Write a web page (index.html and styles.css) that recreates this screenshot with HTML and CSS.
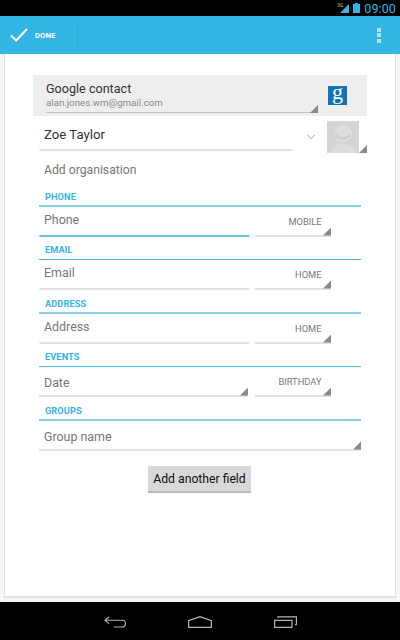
FILE: index.html
```
<!DOCTYPE html>
<html lang="en">
<head>
<meta charset="utf-8">
<title>Edit contact</title>
<link rel="stylesheet" href="styles.css">
</head>
<body>
<div class="screen">
  <header class="status">
    <span class="net">3G</span>
    <svg class="signal" width="9" height="9" viewBox="0 0 9 9"><path d="M9 0V9H0Z" fill="#33b5e5"/></svg>
    <svg class="battery" width="7" height="10" viewBox="0 0 7 10"><path d="M2 0H5V1H7V10H0V1H2Z" fill="#33b5e5"/></svg>
    <span class="clock">09:00</span>
  </header>
  <div class="actionbar">
    <div class="done">
      <svg width="18" height="14" viewBox="0 0 18 14"><path d="M1 7.5L6.2 12.5L17 1" fill="none" stroke="#fff" stroke-width="2"/></svg>
      <span>DONE</span>
    </div>
    <div class="more"><i></i><i></i><i></i></div>
  </div>
  <main class="sheet">
    <div class="account">
      <div class="account-text spin">
        <div class="account-name">Google contact</div>
        <div class="account-mail">alan.jones.wm@gmail.com</div>
      </div>
      <div class="glogo">g</div>
    </div>
    <div class="name-row">
      <div class="name-field">Zoe Taylor</div>
      <svg class="chev" width="10" height="6" viewBox="0 0 10 6"><path d="M1 1L5 4.5L9 1" fill="none" stroke="#a8a8a8" stroke-width="1"/></svg>
      <div class="photo spin">
        <svg width="32" height="32" viewBox="0 0 32 32"><rect width="32" height="32" fill="#d4d4d4"/><circle cx="16" cy="13" r="9" fill="#dcdcdc"/><path d="M9 14Q16 21 23 14" fill="none" stroke="#c8c8c8" stroke-width="1.5"/><path d="M4 32Q5 23 16 23Q27 23 28 32Z" fill="#dcdcdc"/></svg>
      </div>
    </div>
    <div class="org">Add organisation</div>
    <section class="group">
      <h2 class="thick">PHONE</h2>
      <div class="row">
        <div class="field focus">Phone</div>
        <div class="type spin">MOBILE</div>
      </div>
    </section>
    <section class="group">
      <h2>EMAIL</h2>
      <div class="row">
        <div class="field">Email</div>
        <div class="type spin">HOME</div>
      </div>
    </section>
    <section class="group">
      <h2 class="thick">ADDRESS</h2>
      <div class="row">
        <div class="field">Address</div>
        <div class="type spin">HOME</div>
      </div>
    </section>
    <section class="group">
      <h2>EVENTS</h2>
      <div class="row">
        <div class="field spin plain">Date</div>
        <div class="type spin">BIRTHDAY</div>
      </div>
    </section>
    <section class="group">
      <h2 class="thick">GROUPS</h2>
      <div class="row">
        <div class="field spin plain wide">Group name</div>
      </div>
    </section>
    <div class="actions"><button class="add" type="button">Add another field</button></div>
  </main>
  <nav class="navbar">
    <svg width="22" height="12" viewBox="0 0 22 12"><path d="M5 1L1 4.3L5 7.6M1 4.3H18Q21.5 4.3 21.5 7.6Q21.5 11 18 11H10" fill="none" stroke="#b4b4b4" stroke-width="1.1"/></svg>
    <svg width="24" height="12" viewBox="0 0 24 12"><path d="M.6 4.6L12 .6L23.4 4.6V11.4H.6Z" fill="none" stroke="#b4b4b4" stroke-width="1.2"/></svg>
    <svg width="23" height="12" viewBox="0 0 23 12"><path d="M.6 4.4H18V11.4H.6Z" fill="none" stroke="#b4b4b4" stroke-width="1.2"/><path d="M4 2V.8H22.4V8.6H21" fill="none" stroke="#b4b4b4" stroke-width="1.2"/></svg>
  </nav>
</div>
</body>
</html>
```
FILE: styles.css
```
* { box-sizing: border-box; }
html, body { margin: 0; padding: 0; }
body { background: #000; font-family: Roboto, "Liberation Sans", sans-serif; }
.screen { width: 400px; height: 640px; display: flex; flex-direction: column; background: #f6f6f6; overflow: hidden; }

.status { height: 16px; background: #000; display: flex; align-items: flex-start; justify-content: flex-end; padding-right: 4px; flex: none; }
.net { font-size: 5px; color: #bbb; margin-top: 2px; line-height: 6px; margin-right: -3px; }
.signal { margin-right: 4px; margin-top: 4px; }
.battery { margin-right: 4px; margin-top: 3px; }
.clock { font-size: 12.5px; color: #33b5e5; line-height: 16px; letter-spacing: .1px; margin-top: 1px; }

.actionbar { height: 38px; flex: none; background: #33b5e5; display: flex; align-items: center; justify-content: space-between; }
.done { width: 78px; height: 24px; display: flex; align-items: center; padding-left: 10px; gap: 7px; border-right: 1px solid #2fabd9; color: #fff; font-size: 7.8px; font-weight: 700; }
.more { width: 4px; margin-right: 19px; display: flex; flex-direction: column; gap: 1.5px; }
.more i { display: block; height: 4px; background: #b5e3f5; }

.sheet { width: 392px; height: 544px; margin: 0 4px; flex: none; background: #fff; border: solid #e2e2e2; border-width: 0 1px 2px; padding: 21px 28px 0; }

.spin { position: relative; }
.spin::after { content: ""; position: absolute; right: 0; bottom: -1px; width: 8px; height: 8px; background: #8a8a8a; clip-path: polygon(100% 0, 100% 100%, 0 100%); }
.photo.spin::after { bottom: 0; }

.account { height: 41px; background: #eeeeee; display: flex; align-items: flex-start; padding: 5px 20px 0 13px; }
.account-text { width: 272px; height: 33px; border-bottom: 1px solid #c4c4c4; }
.account-name { font-size: 12.6px; line-height: 17px; color: #333; }
.account-mail { font-size: 9.7px; line-height: 12px; color: #8a8a8a; }
.glogo { width: 19px; height: 19px; margin: 6px 0 0 10px; flex: none; background: #0f74b8; color: #fff; text-align: center; font-family: "Liberation Serif", serif; font-size: 22px; line-height: 12px; }

.name-row { height: 46px; display: flex; align-items: flex-start; padding: 2px 0 0 6px; }
.name-field { width: 254px; height: 33px; padding: 8px 5px 0; font-size: 13.2px; line-height: 18px; color: #333; border-bottom: 2px solid #e0e0e0; border-radius: 0 0 2px 2px; }
.chev { margin: 16px 0 0 13px; flex: none; }
.photo { width: 40px; height: 32px; margin: 3px 0 0 11px; flex: none; }
.photo svg { display: block; }

.org { height: 28.5px; margin-top: -1px; padding-left: 11px; font-size: 12.2px; line-height: 18px; color: #777; }

.group { height: 53.5px; padding: 0 6px; }
.group h2 { margin: 0; height: 17px; padding: 0 0 0 6px; font-size: 9.2px; line-height: 13px; font-weight: 700; color: #33b5e5; border-bottom: 1px solid #45bce7; letter-spacing: .1px; }
.group h2.thick { height: 17.5px; border-bottom: 2px solid #85d0ea; }

.row { display: flex; align-items: flex-start; height: 36px; }
.field { width: 211px; height: 29.5px; padding: 5px 5px 0; font-size: 12.4px; line-height: 16px; color: #777; border-bottom: 2px solid #e2e2e2; border-radius: 0 0 2px 2px; }
.field.focus { border-bottom-color: #6cc3e3; }
.field.spin { padding-top: 8px; }
.field.plain { width: 209px; margin-right: 2px; border-radius: 0; }
.field.wide { width: 322px; margin-right: 0; }
.type { width: 76px; height: 29.5px; margin-left: 5px; padding: 9px 9.5px 0 0; text-align: right; font-size: 9.3px; line-height: 12px; color: #777; border-bottom: 2px solid #e2e2e2; }

.actions { display: flex; justify-content: center; margin-top: 9px; padding-right: 1px; }
.add { width: 103px; height: 27px; padding: 0; border: 0; border-bottom: 2px solid #b8b8b8; background: #d8d8d8; font-family: Roboto, "Liberation Sans", sans-serif; font-size: 12.2px; color: #111; }

.navbar { margin-top: 4px; height: 38px; flex: none; background: #000; display: flex; align-items: center; justify-content: center; gap: 62px; padding-top: 2px; }
```
